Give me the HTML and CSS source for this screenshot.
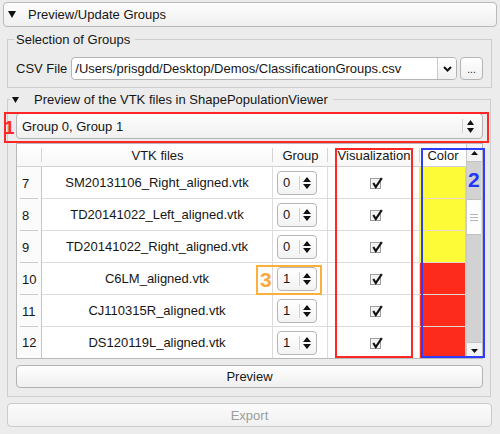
FILE: index.html
```html
<!DOCTYPE html>
<html>
<head>
<meta charset="utf-8">
<title>Preview/Update Groups</title>
<link rel="stylesheet" href="styles.css">
</head>
<body>
<div class="page">
  <div class="toggle">
    <svg class="tri" width="8" height="7" viewBox="0 0 8 7"><polygon points="0,0 8,0 4,7" fill="#111"/></svg>
    <span>Preview/Update Groups</span>
  </div>

  <fieldset class="box box-sel">
    <legend class="legend">Selection of Groups</legend>
    <div class="csv-row">
      <span class="label">CSV File</span>
      <div class="combo-edit">
        <span class="path">/Users/prisgdd/Desktop/Demos/ClassificationGroups.csv</span>
        <span class="combo-btn"><svg width="9" height="6" viewBox="0 0 9 6"><polyline points="1,1 4.5,4.5 8,1" fill="none" stroke="#111" stroke-width="2"/></svg></span>
      </div>
      <div class="btn-dots">...</div>
    </div>
  </fieldset>

  <fieldset class="box box-prev">
    <legend class="legend legend-tri"><svg class="tri2" width="7" height="6" viewBox="0 0 7 6"><polygon points="0,0 7,0 3.5,6" fill="#111"/></svg><span>Preview of the VTK files in ShapePopulationViewer</span></legend>

    <div class="combo-group">
      <span class="combo-text">Group 0, Group 1</span>
      <span class="sep"></span>
      <svg width="7" height="13" viewBox="0 0 7 13"><polygon points="0,5 3.5,0 7,5" fill="#111"/><polygon points="0,8 7,8 3.5,13" fill="#111"/></svg>
    </div>

    <div class="table">
      <div class="grid">
        <div class="row head">
          <div class="hcell corner"></div>
          <div class="hcell">VTK files</div>
          <div class="hcell">Group</div>
          <div class="hcell">Visualization</div>
          <div class="hcell last">Color</div>
        </div>

        <div class="row">
          <div class="cell rh">7</div>
          <div class="cell">SM20131106_Right_aligned.vtk</div>
          <div class="cell grp"><span class="spin"><span class="spin-val">0</span><span class="spin-sep"></span><svg width="8" height="12" viewBox="0 0 8 12"><polygon points="0,5 4,0 8,5" fill="#111"/><polygon points="0,7 8,7 4,12" fill="#111"/></svg></span></div>
          <div class="cell vis"><svg class="chk" width="14" height="14" viewBox="0 0 14 14"><rect x="0.5" y="2.5" width="10" height="10" fill="#f4f4f4" stroke="#9d9d9d"/><polyline points="3.3,7 5.8,11 11.8,2" fill="none" stroke="#111" stroke-width="2.2"/></svg></div>
          <div class="cell col yellow"></div>
        </div>

        <div class="row">
          <div class="cell rh">8</div>
          <div class="cell">TD20141022_Left_aligned.vtk</div>
          <div class="cell grp"><span class="spin"><span class="spin-val">0</span><span class="spin-sep"></span><svg width="8" height="12" viewBox="0 0 8 12"><polygon points="0,5 4,0 8,5" fill="#111"/><polygon points="0,7 8,7 4,12" fill="#111"/></svg></span></div>
          <div class="cell vis"><svg class="chk" width="14" height="14" viewBox="0 0 14 14"><rect x="0.5" y="2.5" width="10" height="10" fill="#f4f4f4" stroke="#9d9d9d"/><polyline points="3.3,7 5.8,11 11.8,2" fill="none" stroke="#111" stroke-width="2.2"/></svg></div>
          <div class="cell col yellow"></div>
        </div>

        <div class="row">
          <div class="cell rh">9</div>
          <div class="cell">TD20141022_Right_aligned.vtk</div>
          <div class="cell grp"><span class="spin"><span class="spin-val">0</span><span class="spin-sep"></span><svg width="8" height="12" viewBox="0 0 8 12"><polygon points="0,5 4,0 8,5" fill="#111"/><polygon points="0,7 8,7 4,12" fill="#111"/></svg></span></div>
          <div class="cell vis"><svg class="chk" width="14" height="14" viewBox="0 0 14 14"><rect x="0.5" y="2.5" width="10" height="10" fill="#f4f4f4" stroke="#9d9d9d"/><polyline points="3.3,7 5.8,11 11.8,2" fill="none" stroke="#111" stroke-width="2.2"/></svg></div>
          <div class="cell col yellow"></div>
        </div>

        <div class="row">
          <div class="cell rh">10</div>
          <div class="cell">C6LM_aligned.vtk</div>
          <div class="cell grp"><span class="spin"><span class="spin-val">1</span><span class="spin-sep"></span><svg width="8" height="12" viewBox="0 0 8 12"><polygon points="0,5 4,0 8,5" fill="#111"/><polygon points="0,7 8,7 4,12" fill="#111"/></svg></span></div>
          <div class="cell vis"><svg class="chk" width="14" height="14" viewBox="0 0 14 14"><rect x="0.5" y="2.5" width="10" height="10" fill="#f4f4f4" stroke="#9d9d9d"/><polyline points="3.3,7 5.8,11 11.8,2" fill="none" stroke="#111" stroke-width="2.2"/></svg></div>
          <div class="cell col red"></div>
        </div>

        <div class="row">
          <div class="cell rh">11</div>
          <div class="cell">CJ110315R_aligned.vtk</div>
          <div class="cell grp"><span class="spin"><span class="spin-val">1</span><span class="spin-sep"></span><svg width="8" height="12" viewBox="0 0 8 12"><polygon points="0,5 4,0 8,5" fill="#111"/><polygon points="0,7 8,7 4,12" fill="#111"/></svg></span></div>
          <div class="cell vis"><svg class="chk" width="14" height="14" viewBox="0 0 14 14"><rect x="0.5" y="2.5" width="10" height="10" fill="#f4f4f4" stroke="#9d9d9d"/><polyline points="3.3,7 5.8,11 11.8,2" fill="none" stroke="#111" stroke-width="2.2"/></svg></div>
          <div class="cell col red"></div>
        </div>

        <div class="row">
          <div class="cell rh">12</div>
          <div class="cell">DS120119L_aligned.vtk</div>
          <div class="cell grp"><span class="spin"><span class="spin-val">1</span><span class="spin-sep"></span><svg width="8" height="12" viewBox="0 0 8 12"><polygon points="0,5 4,0 8,5" fill="#111"/><polygon points="0,7 8,7 4,12" fill="#111"/></svg></span></div>
          <div class="cell vis"><svg class="chk" width="14" height="14" viewBox="0 0 14 14"><rect x="0.5" y="2.5" width="10" height="10" fill="#f4f4f4" stroke="#9d9d9d"/><polyline points="3.3,7 5.8,11 11.8,2" fill="none" stroke="#111" stroke-width="2.2"/></svg></div>
          <div class="cell col red"></div>
        </div>
      </div>

      <div class="scrollbar">
        <div class="sb-btn sb-up"><svg width="7" height="4" viewBox="0 0 7 4"><polygon points="0,4 3.5,0 7,4" fill="#111"/></svg></div>
        <div class="sb-track">
          <div class="sb-thumb"><span class="grip"></span></div>
        </div>
        <div class="sb-btn sb-down"><svg width="7" height="4" viewBox="0 0 7 4"><polygon points="0,0 7,0 3.5,4" fill="#111"/></svg></div>
      </div>
    </div>

    <div class="btn preview">Preview</div>
  </fieldset>

  <div class="btn export">Export</div>

  <div class="ann ann-red1"></div>
  <div class="num num1">1</div>
  <div class="ann ann-vis"></div>
  <div class="ann ann-color"></div>
  <div class="num num2">2</div>
  <div class="ann ann-group"></div>
  <div class="num num3">3</div>
</div>
</body>
</html>
```

FILE: styles.css
```css
* { box-sizing: border-box; }
html, body { margin: 0; padding: 0; }
body {
  width: 500px;
  height: 434px;
  background: #ececec;
  font-family: "Liberation Sans", Arial, sans-serif;
  font-size: 13px;
  color: #161616;
  overflow: hidden;
}
.page {
  position: relative;
  width: 500px;
  height: 434px;
  padding-top: 2px;
}

/* top disclosure button */
.toggle {
  display: flex;
  align-items: center;
  gap: 12px;
  height: 25px;
  margin: 0 3px;
  padding-left: 4px;
  border: 1px solid #b9b9b9;
  border-radius: 4px;
  background: linear-gradient(#fdfdfd, #efefef);
}

/* group boxes */
.box {
  min-width: 0;
  border: 1px solid #cdcdcd;
}
.box-sel {
  margin: 5px 8px 0 7px;
  padding: 10px 8px 7px 8px;
}
.box-prev {
  margin: 4px 9px 0 7px;
  padding: 0 7px 8px 8px;
}
.legend {
  margin-left: -2px;
  padding: 0 5px 0 2px;
  line-height: 15px;
}
.legend-tri {
  margin-left: -6px;
  display: flex;
  align-items: center;
}
.tri2 { margin-right: 15px; }

/* CSV row */
.csv-row {
  display: flex;
  align-items: center;
}
.label { margin-right: 4px; white-space: nowrap; }
.combo-edit {
  flex: 1;
  min-width: 0;
  display: flex;
  height: 23px;
  border: 1px solid #b4b4b4;
  border-radius: 4px;
  background: #fff;
  overflow: hidden;
}
.path {
  flex: 1;
  padding-left: 3px;
  line-height: 21px;
  white-space: nowrap;
  overflow: hidden;
}
.combo-btn {
  width: 19px;
  display: flex;
  align-items: center;
  justify-content: center;
  border-left: 1px solid #cacaca;
  background: linear-gradient(#ffffff, #f1f1f1);
}
.btn-dots {
  width: 23px;
  height: 23px;
  margin-left: 3px;
  border: 1px solid #b4b4b4;
  border-radius: 4px;
  background: linear-gradient(#ffffff, #f0f0f0);
  display: flex;
  align-items: center;
  justify-content: center;
  font-size: 10px;
  padding-top: 2px;
}

/* group combo */
.combo-group {
  display: flex;
  align-items: center;
  height: 26px;
  margin-top: 6px;
  padding: 0 8px 0 5px;
  border: 1px solid #b4b4b4;
  border-radius: 4px;
  background: linear-gradient(#fefefe, #f0f0f0);
}
.combo-text { flex: 1; }
.sep {
  width: 1px;
  height: 14px;
  background: #d0d0d0;
  margin-right: 4px;
}

/* table */
.table {
  display: flex;
  margin-top: 4px;
  height: 216px;
  border: 1px solid #b9b9b9;
  background: #fff;
}
.grid {
  display: grid;
  grid-template-columns: 25px 231px 55px 92px 46px;
  grid-template-rows: 23px repeat(5, 32px) 31px;
}
.row { display: contents; }
.cell {
  display: flex;
  align-items: center;
  justify-content: center;
  white-space: nowrap;
  border-right: 1px solid #dcdcdc;
  border-bottom: 1px solid #dcdcdc;
}
.row:last-child > .cell { border-bottom: 0; }
.hcell {
  display: flex;
  align-items: center;
  justify-content: center;
  white-space: nowrap;
  border-bottom: 1px solid #d2d2d2;
  background:
    linear-gradient(#d4d4d4, #d4d4d4) right center / 1px 14px no-repeat,
    linear-gradient(#ffffff, #f7f7f7);
}
.hcell.last {
  background: #fff;
}
.cell.rh {
  justify-content: flex-start;
  padding-left: 5px;
  border-right: 1px solid #c6c6c6;
  border-bottom: 0;
  background:
    linear-gradient(to right, transparent 3px, #cbcbcb 3px, #cbcbcb 21px, transparent 21px) left bottom / 100% 1px no-repeat,
    #fbfbfb;
}
.row:last-child > .cell.rh { background: #fbfbfb; }
.cell.grp {
  justify-content: flex-start;
  padding-left: 4px;
}
.cell.vis { padding-left: 6px; }
.cell.col { border-right: 1px solid #d0d0d0; }
.yellow { background: #fdfb37; }
.red { background: #fd2b1c; }
.cell.yellow, .cell.red { border-bottom-color: #e8d8d0; }

/* spin box */
.spin {
  display: flex;
  align-items: center;
  width: 40px;
  height: 24px;
  border: 1px solid #b6b6b6;
  border-radius: 4px;
  background: linear-gradient(#ffffff, #f3f3f3);
}
.spin-val {
  width: 21px;
  padding-left: 5px;
}
.spin-sep {
  width: 1px;
  height: 14px;
  background: #d2d2d2;
  margin-right: 3px;
}

/* scrollbar */
.scrollbar {
  width: 16px;
  display: flex;
  flex-direction: column;
  border-left: 1px solid #c8c8c8;
}
.sb-btn {
  display: flex;
  align-items: center;
  justify-content: center;
  background: #f3f3f3;
}
.sb-up { height: 18px; border-bottom: 1px solid #c4c4c4; }
.sb-down { height: 16px; border-top: 1px solid #c4c4c4; }
.sb-track {
  flex: 1;
  background: #d2d2d2;
  border-right: 1px solid #e2e2e2;
  padding-top: 37px;
}
.sb-thumb {
  height: 36px;
  background: #fdfdfd;
  border-top: 1px solid #c0c0c0;
  border-bottom: 1px solid #c0c0c0;
  display: flex;
  align-items: center;
  justify-content: center;
}
.grip {
  width: 8px;
  height: 7px;
  background: repeating-linear-gradient(#b5b5b5 0, #b5b5b5 1px, transparent 1px, transparent 3px);
}

/* buttons */
.btn {
  display: flex;
  align-items: center;
  justify-content: center;
  border: 1px solid #b3b3b3;
  border-radius: 4px;
  background: linear-gradient(#ffffff, #efefef);
}
.preview {
  height: 23px;
  margin-top: 6px;
}
.export {
  height: 24px;
  margin: 6px 8px 0 7px;
  color: #9c9c9c;
  border-color: #cbcbcb;
  background: linear-gradient(#fbfbfb, #f1f1f1);
}

/* annotations drawn over the screenshot */
.ann {
  position: absolute;
  border: 2px solid #ff2626;
}
.ann-red1 { left: 4px; top: 112px; width: 485px; height: 31px; }
.ann-vis { left: 335px; top: 148px; width: 78px; height: 210px; }
.ann-color { left: 421px; top: 148px; width: 64px; height: 210px; border-color: #2f3cff; }
.ann-group { left: 256px; top: 265px; width: 66px; height: 30px; border-color: #fbb03b; }
.num {
  position: absolute;
  font-weight: bold;
  line-height: 1;
}
.num1 { left: 4px; top: 118px; font-size: 19px; color: #ff2626; }
.num2 { left: 468px; top: 169px; font-size: 21px; color: #2336f5; }
.num3 { left: 260px; top: 269px; font-size: 21px; color: #f9a83a; }
```
